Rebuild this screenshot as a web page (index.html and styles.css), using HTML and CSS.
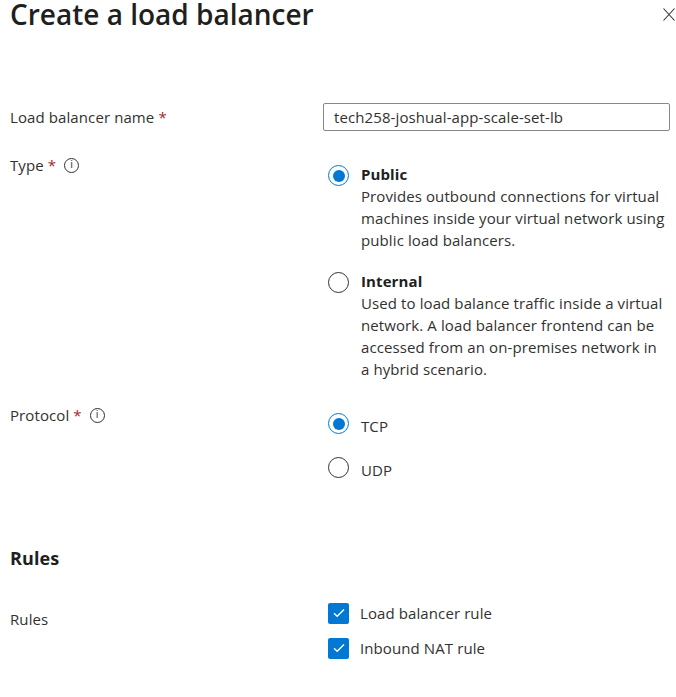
FILE: index.html
```html
<!DOCTYPE html>
<html>
<head>
<meta charset="utf-8">
<link rel="stylesheet" href="styles.css">
</head>
<body>
<div class="panel">
  <header class="head">
    <h1 class="title">Create a load balancer</h1>
    <button class="close" aria-label="Close">
      <svg width="12" height="13" viewBox="0 0 12 13"><path d="M0.5 0.5L11.5 12.5M11.5 0.5L0.5 12.5" stroke="#323130" stroke-width="1.1" fill="none"/></svg>
    </button>
  </header>

  <div class="form">
    <div class="row row-name">
      <div class="label">Load balancer name <span class="req">*</span></div>
      <div class="control"><input class="text" type="text" value="tech258-joshual-app-scale-set-lb"></div>
    </div>

    <div class="row row-type">
      <div class="label">Type <span class="req">*</span> <span class="info">i</span></div>
      <div class="control options">
        <div class="option">
          <span class="radio checked"></span>
          <div class="opt-text">
            <div class="opt-title">Public</div>
            <div class="opt-desc">Provides outbound connections for virtual machines inside your virtual network using public load balancers.</div>
          </div>
        </div>
        <div class="option">
          <span class="radio"></span>
          <div class="opt-text">
            <div class="opt-title">Internal</div>
            <div class="opt-desc">Used to load balance traffic inside a virtual network. A load balancer frontend can be accessed from an on-premises network in a hybrid scenario.</div>
          </div>
        </div>
      </div>
    </div>

    <div class="row row-proto">
      <div class="label">Protocol <span class="req">*</span> <span class="info">i</span></div>
      <div class="control simple">
        <div class="option simple-opt"><span class="radio checked"></span><span class="opt-plain">TCP</span></div>
        <div class="option simple-opt"><span class="radio"></span><span class="opt-plain">UDP</span></div>
      </div>
    </div>

    <h2 class="section">Rules</h2>

    <div class="row row-rules">
      <div class="label">Rules</div>
      <div class="control checks">
        <div class="check-row"><span class="checkbox"><svg width="12" height="10" viewBox="0 0 12 10"><path d="M1 5.2L4.2 8.2L11 1.5" stroke="#fff" stroke-width="1.4" fill="none"/></svg></span><span class="opt-plain">Load balancer rule</span></div>
        <div class="check-row"><span class="checkbox"><svg width="12" height="10" viewBox="0 0 12 10"><path d="M1 5.2L4.2 8.2L11 1.5" stroke="#fff" stroke-width="1.4" fill="none"/></svg></span><span class="opt-plain">Inbound NAT rule</span></div>
      </div>
    </div>
  </div>
</div>
</body>
</html>
```

FILE: styles.css
```css
* { box-sizing: border-box; }
html, body { margin: 0; padding: 0; background: #fff; }
body {
  font-family: "Open Sans", "Noto Sans", "Liberation Sans", sans-serif;
  font-size: 15px;
  letter-spacing: 0.1px;
  color: #323130;
}
.panel { padding: 0 6px 0 10px; }
.head {
  display: flex;
  justify-content: space-between;
  align-items: flex-start;
  height: 103px;
}
.title {
  margin: 0;
  font-size: 28px;
  font-weight: 600;
  line-height: 28px;
  color: #201f1e;
  letter-spacing: 0;
}
.close {
  border: 0;
  background: none;
  padding: 0;
  margin: 8px -5px 0 0;
  width: 12px;
  height: 13px;
  display: flex;
}
.form { display: flex; flex-direction: column; }
.row {
  display: grid;
  grid-template-columns: 313px 1fr;
}
.label {
  display: flex;
  align-items: center;
  gap: 4px;
  height: 22px;
  line-height: 22px;
  white-space: nowrap;
}
.req { color: #a4262c; }
.info {
  display: inline-flex;
  align-items: center;
  justify-content: center;
  width: 15px;
  height: 15px;
  border: 1px solid #323130;
  border-radius: 50%;
  font-family: "Liberation Sans", sans-serif;
  font-size: 10px;
  line-height: 1;
  margin-left: 4px;
  margin-top: 0;
  letter-spacing: 0;
}
/* name row */
.row-name { align-items: center; }
.text {
  display: block;
  width: 100%;
  height: 28px;
  border: 1px solid #8a8886;
  border-radius: 2px;
  padding: 0 10px;
  font: inherit;
  letter-spacing: 0.1px;
  color: #323130;
  outline: none;
}
/* type row */
.row-type { margin-top: 23px; }
.row-type .control { padding-top: 9px; }
.options { display: flex; flex-direction: column; gap: 19px; }
.option { display: flex; gap: 12px; align-items: flex-start; }
.radio {
  flex: none;
  width: 21px;
  height: 21px;
  border-radius: 50%;
  border: 1px solid #323130;
  background: #fff;
  margin-left: 5px;
  margin-top: 2px;
  position: relative;
}
.radio.checked { border-color: #0078d4; }
.radio.checked::after {
  content: "";
  position: absolute;
  left: 3.5px; top: 3.5px;
  width: 12px; height: 12px;
  border-radius: 50%;
  background: #0078d4;
}
.opt-title { font-weight: 700; line-height: 22px; color: #201f1e; }
.opt-desc { line-height: 22px; max-width: 306px; }
/* protocol row */
.row-proto { margin-top: 24px; }
.row-proto .control { padding-top: 11px; }
.simple { display: flex; flex-direction: column; gap: 22px; }
.simple-opt .radio { margin-top: -2px; }
.opt-plain { line-height: 22px; }
/* rules */
.section {
  margin: 65px 0 0 0;
  font-size: 18px;
  font-weight: 700;
  line-height: 24px;
  color: #201f1e;
}
.row-rules { margin-top: 32px; }
.row-rules .label { margin-top: 6px; }
.checks { display: flex; flex-direction: column; gap: 13px; }
.check-row { display: flex; align-items: center; gap: 11px; height: 22px; }
.checkbox {
  flex: none;
  width: 21px;
  height: 21px;
  border-radius: 2px;
  background: #0078d4;
  margin-left: 5px;
  display: flex;
  align-items: center;
  justify-content: center;
}
```
